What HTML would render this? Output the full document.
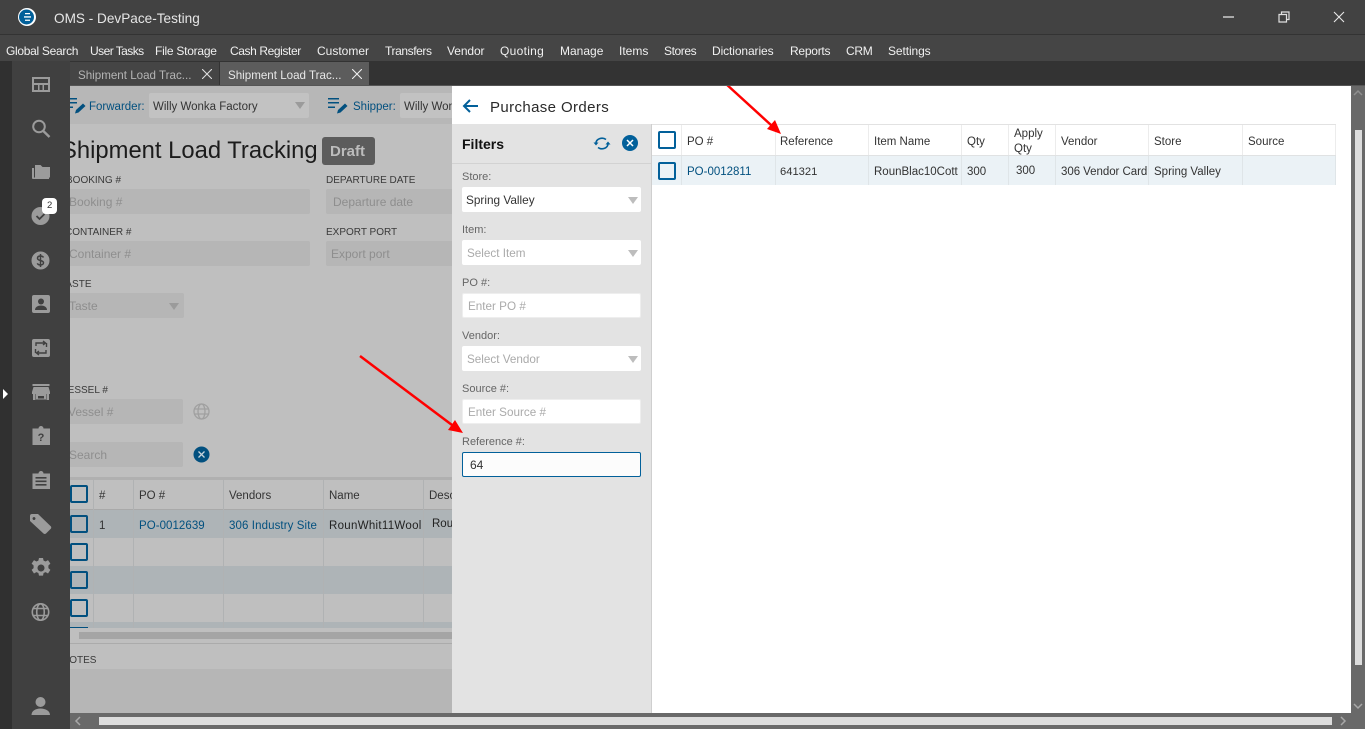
<!DOCTYPE html>
<html><head><meta charset="utf-8"><title>OMS</title>
<style>
html,body{margin:0;padding:0;width:1365px;height:729px;overflow:hidden;background:#bfbfbf;font-family:"Liberation Sans",sans-serif;font-size:11.5px;color:#222}
div,span,svg{position:absolute}
.t{white-space:nowrap;line-height:16px}
.m{top:44px;color:#f0f0f0;font-size:12px;white-space:nowrap;line-height:14px}
.lab{color:#3a3a3a;font-size:10px;white-space:nowrap;line-height:16px}
.inp{background:#b6b6b6;border-radius:2px}
.ph{color:#8e8e8e;font-size:12px;white-space:nowrap;line-height:14px}
.fl{color:#666;font-size:11px;left:462px;white-space:nowrap;line-height:14px}
.fi{left:462px;width:179px;height:25px;background:#fff;border-radius:2px}
.fp{color:#aaa;font-size:11.7px;white-space:nowrap;line-height:16px}
.arr{width:0;height:0;border-left:5px solid transparent;border-right:5px solid transparent;border-top:7px solid #bdbdbd}
.cb{box-sizing:border-box;width:18px;height:18px;border:2px solid #02609a;border-radius:2px}
.cbd{box-sizing:border-box;width:18px;height:18px;border:2px solid #02507f;border-radius:2px}
.vl{width:1px;background:#b0b2b3}
.vr{width:1px;background:#dfe5e8}
.vh{width:1px;background:#ececec}
.h{color:#333;white-space:nowrap;line-height:16px}
</style></head><body>

<!-- main shaded content -->
<div style="left:70px;top:86px;width:382px;height:627px;background:#bfbfbf"></div>
<div style="left:70px;top:86px;width:382px;height:38px;background:#b7b7b7"></div>
<svg style="left:66px;top:97px;width:20px;height:18px" viewBox="0 0 20 18"><path d="M0 1h11v1.500H0zM0 5h11v1.500H0zM0 9.500h7v1.500H0z" fill="#02507f"/><path d="M9 16.500l1-3.500 7-6.500 2.500 2.500-7 6.500z" fill="#02507f"/></svg>
<span class="t" style="left:89px;top:99px;color:#02507f">Forwarder:</span>
<div class="inp" style="left:149px;top:93px;width:160px;height:25px;background:#c2c2c2"></div>
<span class="t" style="left:153px;top:99px;color:#333">Willy Wonka Factory</span>
<div class="arr" style="left:295px;top:102px;border-top-color:#9b9b9b"></div>
<svg style="left:328px;top:97px;width:20px;height:18px" viewBox="0 0 20 18"><path d="M0 1h11v1.500H0zM0 5h11v1.500H0zM0 9.500h7v1.500H0z" fill="#02507f"/><path d="M9 16.500l1-3.500 7-6.500 2.500 2.500-7 6.500z" fill="#02507f"/></svg>
<span class="t" style="left:353px;top:99px;color:#02507f">Shipper:</span>
<div class="inp" style="left:400px;top:93px;width:60px;height:25px;background:#c2c2c2"></div>
<span class="t" style="left:404px;top:99px;color:#333">Willy Wonka</span>

<span class="t" style="left:61px;top:137px;font-size:23.8px;line-height:28px;color:#1c1c1c">Shipment Load Tracking</span>
<div style="left:322px;top:137px;width:53px;height:28px;background:#5c5c5c;border-radius:3px"></div>
<span class="t" style="left:330px;top:144px;font-size:15px;font-weight:bold;color:#bdbdbd">Draft</span>

<span class="lab" style="left:66px;top:173px">BOOKING #</span>
<div class="inp" style="left:60px;top:189px;width:250px;height:25px"></div>
<span class="ph" style="left:69px;top:195px">Booking #</span>
<span class="lab" style="left:326px;top:173px">DEPARTURE DATE</span>
<div class="inp" style="left:326px;top:189px;width:130px;height:25px"></div>
<span class="ph" style="left:333px;top:195px">Departure date</span>
<span class="lab" style="left:65px;top:225px">CONTAINER #</span>
<div class="inp" style="left:60px;top:241px;width:250px;height:25px"></div>
<span class="ph" style="left:69px;top:247px">Container #</span>
<span class="lab" style="left:326px;top:225px">EXPORT PORT</span>
<div class="inp" style="left:326px;top:241px;width:130px;height:25px"></div>
<span class="ph" style="left:331px;top:247px">Export port</span>
<span class="lab" style="left:60px;top:277px">TASTE</span>
<div class="inp" style="left:60px;top:293px;width:124px;height:25px"></div>
<span class="ph" style="left:69px;top:299px">Taste</span>
<div class="arr" style="left:169px;top:303px;border-top-color:#9b9b9b"></div>
<span class="lab" style="left:61px;top:383px">VESSEL #</span>
<div class="inp" style="left:60px;top:399px;width:123px;height:25px"></div>
<span class="ph" style="left:68px;top:405px">Vessel #</span>
<svg style="left:193px;top:403px;width:17px;height:17px" viewBox="0 0 17 17" fill="none" stroke="#a0a0a0" stroke-width="1.300"><circle cx="8.500" cy="8.500" r="7.500"/><ellipse cx="8.500" cy="8.500" rx="3.500" ry="7.500"/><path d="M1 6h15M1 11h15"/></svg>
<div class="inp" style="left:60px;top:442px;width:123px;height:25px"></div>
<span class="ph" style="left:69px;top:448px">Search</span>
<svg style="left:193px;top:446px;width:17px;height:17px" viewBox="0 0 17 17"><circle cx="8.500" cy="8.500" r="8" fill="#02507f"/><path d="M5.500 5.500l6 6M11.500 5.500l-6 6" stroke="#c8d4dc" stroke-width="1.300"/></svg>

<!-- background grid -->
<div style="left:70px;top:477px;width:382px;height:3px;background:#b0b0b0"></div>
<div style="left:70px;top:509px;width:382px;height:1px;background:#a9a9a9"></div>
<div style="left:70px;top:510px;width:382px;height:28px;background:#aeb4b7"></div>
<div style="left:70px;top:566px;width:382px;height:28px;background:#aeb4b7"></div>
<div style="left:70px;top:622px;width:382px;height:6px;background:#aeb4b7"></div>
<div class="vl" style="left:93px;top:480px;height:148px"></div>
<div class="vl" style="left:133px;top:480px;height:148px"></div>
<div class="vl" style="left:223px;top:480px;height:148px"></div>
<div class="vl" style="left:323px;top:480px;height:148px"></div>
<div class="vl" style="left:423px;top:480px;height:148px"></div>
<div class="cbd" style="left:70px;top:485px"></div>
<div class="cbd" style="left:70px;top:515px"></div>
<div class="cbd" style="left:70px;top:543px"></div>
<div class="cbd" style="left:70px;top:571px"></div>
<div class="cbd" style="left:70px;top:599px"></div>
<div style="left:70px;top:627px;width:18px;height:1px;background:#02507f"></div>
<span class="h" style="left:99px;top:488px">#</span>
<span class="h" style="left:139px;top:488px">PO #</span>
<span class="h" style="left:229px;top:488px">Vendors</span>
<span class="h" style="left:329px;top:488px">Name</span>
<span class="h" style="left:429px;top:488px">Descr</span>
<span class="h" style="left:99px;top:518px">1</span>
<span class="t" style="left:139px;top:518px;color:#02507f;letter-spacing:.05px">PO-0012639</span>
<span class="t" style="left:229px;top:518px;color:#02507f;letter-spacing:.1px">306 Industry Site</span>
<span class="t" style="left:329px;top:518px;color:#222;letter-spacing:.3px">RounWhit11Wool</span>
<span class="t" style="left:432px;top:516px;color:#222">Roun</span>
<div style="left:79px;top:632px;width:373px;height:7px;background:#a5a5a5"></div>
<div style="left:70px;top:643px;width:382px;height:1px;background:#ababab"></div>
<span class="lab" style="left:62px;top:653px">NOTES</span>
<div style="left:70px;top:669px;width:382px;height:44px;background:#b6b6b6"></div>

<!-- right panel -->
<div style="left:452px;top:86px;width:899px;height:627px;background:#fff"></div>
<svg style="left:462px;top:98px;width:17px;height:16px" viewBox="0 0 17 16" fill="none" stroke="#02609a" stroke-width="2"><path d="M16 8H2M8 2L2 8l6 6"/></svg>
<span class="t" style="left:490px;top:98px;font-size:15px;line-height:19px;color:#2a2a2a;letter-spacing:.38px">Purchase Orders</span>
<div style="left:452px;top:124px;width:200px;height:589px;background:#e3e3e3"></div>
<div style="left:651px;top:124px;width:1px;height:589px;background:#cfcfcf"></div>
<div style="left:452px;top:163px;width:199px;height:1px;background:#d2d2d2"></div>
<span class="t" style="left:462px;top:135px;font-size:14px;line-height:18px;font-weight:bold;color:#111">Filters</span>
<svg style="left:593px;top:135px;width:18px;height:17px" viewBox="0 0 18 17" fill="none" stroke="#02609a" stroke-width="1.600"><path d="M3 8a6 5 0 0 1 10-3.500M15 9a6 5 0 0 1-10 3.500"/><path d="M0.500 7.500h5L3 10.500zM12.500 9.500h5L15 6.500z" fill="#02609a" stroke="none"/></svg>
<svg style="left:622px;top:135px;width:16px;height:16px" viewBox="0 0 16 16"><circle cx="8" cy="8" r="8" fill="#02609a"/><path d="M5 5l6 6M11 5l-6 6" stroke="#fff" stroke-width="1.500"/></svg>

<span class="fl" style="top:170px">Store:</span>
<div class="fi" style="top:187px"></div>
<span class="t" style="left:466px;top:193px;color:#333;font-size:11.8px;line-height:14px">Spring Valley</span>
<div class="arr" style="left:628px;top:197px"></div>
<span class="fl" style="top:223px">Item:</span>
<div class="fi" style="top:240px"></div>
<span class="fp" style="left:467px;top:246px">Select Item</span>
<div class="arr" style="left:628px;top:250px"></div>
<span class="fl" style="top:276px">PO #:</span>
<div class="fi" style="top:293px;border:1px solid #eee;box-sizing:border-box"></div>
<span class="fp" style="left:468px;top:299px">Enter PO #</span>
<span class="fl" style="top:329px">Vendor:</span>
<div class="fi" style="top:346px"></div>
<span class="fp" style="left:467px;top:352px">Select Vendor</span>
<div class="arr" style="left:628px;top:356px"></div>
<span class="fl" style="top:382px">Source #:</span>
<div class="fi" style="top:399px;border:1px solid #eee;box-sizing:border-box"></div>
<span class="fp" style="left:468px;top:405px">Enter Source #</span>
<span class="fl" style="top:435px">Reference #:</span>
<div class="fi" style="top:452px;border:1px solid #02609a;box-sizing:border-box;background:#fcfcfc"></div>
<span class="t" style="left:470px;top:458px;color:#333;font-size:12px;line-height:14px">64</span>

<!-- PO grid -->
<div style="left:652px;top:124px;width:684px;height:1px;background:#e2e2e2"></div>
<div style="left:652px;top:155px;width:684px;height:1px;background:#e0e2e3"></div>
<div style="left:652px;top:156px;width:684px;height:29px;background:#ebf2f6"></div>
<div class="vh" style="left:681px;top:125px;height:30px"></div><div class="vr" style="left:681px;top:156px;height:29px"></div>
<div class="vh" style="left:775px;top:125px;height:30px"></div><div class="vr" style="left:775px;top:156px;height:29px"></div>
<div class="vh" style="left:868px;top:125px;height:30px"></div><div class="vr" style="left:868px;top:156px;height:29px"></div>
<div class="vh" style="left:961px;top:125px;height:30px"></div><div class="vr" style="left:961px;top:156px;height:29px"></div>
<div class="vh" style="left:1008px;top:125px;height:30px"></div><div class="vr" style="left:1008px;top:156px;height:29px"></div>
<div class="vh" style="left:1055px;top:125px;height:30px"></div><div class="vr" style="left:1055px;top:156px;height:29px"></div>
<div class="vh" style="left:1148px;top:125px;height:30px"></div><div class="vr" style="left:1148px;top:156px;height:29px"></div>
<div class="vh" style="left:1242px;top:125px;height:30px"></div><div class="vr" style="left:1242px;top:156px;height:29px"></div>
<div class="vh" style="left:1335px;top:125px;height:30px"></div><div class="vr" style="left:1335px;top:156px;height:29px"></div>
<div class="cb" style="left:658px;top:131px"></div>
<div class="cb" style="left:658px;top:162px"></div>
<span class="h" style="left:687px;top:134px">PO #</span>
<span class="h" style="left:780px;top:134px">Reference</span>
<span class="h" style="left:874px;top:134px">Item Name</span>
<span class="h" style="left:967px;top:134px">Qty</span>
<span class="h" style="left:1014px;top:126px">Apply</span>
<span class="h" style="left:1014px;top:141px">Qty</span>
<span class="h" style="left:1061px;top:134px">Vendor</span>
<span class="h" style="left:1154px;top:134px">Store</span>
<span class="h" style="left:1248px;top:134px">Source</span>
<span class="t" style="left:687px;top:164px;color:#02507f">PO-0012811</span>
<span class="h" style="left:780px;top:164px;font-size:11.2px">641321</span>
<span class="h" style="left:874px;top:164px">RounBlac10Cott</span>
<span class="h" style="left:967px;top:164px">300</span>
<span class="h" style="left:1016px;top:163px">300</span>
<span class="h" style="left:1061px;top:164px;letter-spacing:-.05px">306 Vendor Card</span>
<span class="h" style="left:1154px;top:164px">Spring Valley</span>

<!-- scrollbars -->
<div style="left:1351px;top:86px;width:14px;height:643px;background:#696969"></div>
<div style="left:1355px;top:130px;width:7px;height:535px;background:#dcdcdc"></div>
<svg style="left:1353px;top:88px;width:10px;height:10px" viewBox="0 0 10 10" fill="none" stroke="#8f8f8f" stroke-width="1.500"><path d="M1 7l4-4 4 4"/></svg>
<svg style="left:1353px;top:701px;width:10px;height:10px" viewBox="0 0 10 10" fill="none" stroke="#a8a8a8" stroke-width="1.500"><path d="M1 3l4 4 4-4"/></svg>
<div style="left:70px;top:713px;width:1295px;height:16px;background:#696969"></div>
<div style="left:99px;top:717px;width:1233px;height:8px;background:#dcdcdc"></div>
<svg style="left:73px;top:716px;width:10px;height:10px" viewBox="0 0 10 10" fill="none" stroke="#a8a8a8" stroke-width="1.500"><path d="M7 1L3 5l4 4"/></svg>
<svg style="left:1338px;top:716px;width:10px;height:10px" viewBox="0 0 10 10" fill="none" stroke="#a8a8a8" stroke-width="1.500"><path d="M3 1l4 4-4 4"/></svg>

<!-- annotation arrows -->
<svg style="left:0;top:0;width:1365px;height:729px" viewBox="0 0 1365 729">
<path d="M360 356L452 425" stroke="#f00" stroke-width="2.500"/><path d="M463 433L448 430L455 420z" fill="#f00"/>
<path d="M725 83L771 125" stroke="#f00" stroke-width="2.500"/><path d="M781 134L767 129L775 120z" fill="#f00"/>
</svg>

<!-- chrome -->
<div style="left:0;top:0;width:1365px;height:34px;background:#424242"></div>
<div style="left:0;top:34px;width:1365px;height:1px;background:#333"></div>
<div style="left:0;top:35px;width:1365px;height:26px;background:#454545"></div>
<div style="left:0;top:61px;width:1365px;height:25px;background:#333"></div>
<div style="left:70px;top:85px;width:1295px;height:1px;background:#555"></div>
<svg style="left:18px;top:8px;width:18px;height:18px" viewBox="0 0 18 18"><circle cx="9" cy="9" r="9" fill="#fff"/><circle cx="8.500" cy="9" r="7.500" fill="#02609a"/><path d="M7 5h5v1.300H7zM6 8.300h7v1.300H6zM7 11.600h5v1.300H7z" fill="#fff"/></svg>
<span class="t" style="left:54px;top:10px;font-size:13.6px;line-height:17px;color:#e6e6e6">OMS - DevPace-Testing</span>
<div style="left:1223px;top:16px;width:11px;height:2px;background:#aaa"></div>
<svg style="left:1278px;top:11px;width:12px;height:12px" viewBox="0 0 12 12" fill="none" stroke="#e0e0e0" stroke-width="1.200"><path d="M1 3.500h7.500V11H1zM3.500 3V1H11v7.500H9"/></svg>
<svg style="left:1333px;top:11px;width:12px;height:12px" viewBox="0 0 12 12" fill="none" stroke="#e8e8e8" stroke-width="1.100"><path d="M1 1l10 10M11 1L1 11"/></svg>

<span class="m" style="left:6px;letter-spacing:-.3px">Global Search</span>
<span class="m" style="left:90px;letter-spacing:-.55px">User Tasks</span>
<span class="m" style="left:155px;letter-spacing:-.25px">File Storage</span>
<span class="m" style="left:230px;letter-spacing:-.4px">Cash Register</span>
<span class="m" style="left:317px">Customer</span>
<span class="m" style="left:385px;letter-spacing:-.4px">Transfers</span>
<span class="m" style="left:447px;letter-spacing:-.1px">Vendor</span>
<span class="m" style="left:500px;letter-spacing:.3px">Quoting</span>
<span class="m" style="left:560px">Manage</span>
<span class="m" style="left:619px">Items</span>
<span class="m" style="left:664px;letter-spacing:-.4px">Stores</span>
<span class="m" style="left:712px;letter-spacing:-.1px">Dictionaries</span>
<span class="m" style="left:790px;letter-spacing:-.25px">Reports</span>
<span class="m" style="left:846px;letter-spacing:-.3px">CRM</span>
<span class="m" style="left:888px;letter-spacing:-.1px">Settings</span>

<!-- tabs -->
<div style="left:70px;top:62px;width:149px;height:23px;background:#454545"></div>
<span class="t" style="left:78px;top:68px;color:#b5b5b5;font-size:11.6px">Shipment Load Trac...</span>
<svg style="left:202px;top:69px;width:10px;height:10px" viewBox="0 0 10 10" fill="none" stroke="#ddd" stroke-width="1.100"><path d="M0 0l10 10M10 0L0 10"/></svg>
<div style="left:220px;top:62px;width:149px;height:23px;background:#5c5c5c"></div>
<span class="t" style="left:228px;top:68px;color:#e8e8e8;font-size:11.6px">Shipment Load Trac...</span>
<svg style="left:352px;top:69px;width:10px;height:10px" viewBox="0 0 10 10" fill="none" stroke="#eee" stroke-width="1.100"><path d="M0 0l10 10M10 0L0 10"/></svg>

<!-- sidebar -->
<div style="left:0;top:61px;width:12px;height:668px;background:#303030"></div>
<div style="left:12px;top:61px;width:58px;height:668px;background:#404040"></div>
<div style="left:3px;top:389px;width:0;height:0;border-top:5px solid transparent;border-bottom:5px solid transparent;border-left:5px solid #fff"></div>

<svg style="left:0;top:0;width:70px;height:729px" viewBox="0 0 70 729" fill="#9b9b9b">
<!-- table -->
<path fill-rule="evenodd" d="M32 77h18v15H32zM34 79v4h14v-4zM34 85v5h4v-5zM39.500 85v5h3v-5zM44 85v5h4v-5z"/>
<!-- search -->
<circle cx="39" cy="126.500" r="5.800" fill="none" stroke="#9b9b9b" stroke-width="2"/><path d="M43.300 131L49.500 137" fill="none" stroke="#9b9b9b" stroke-width="2.400"/>
<!-- folder -->
<path d="M35 165h5.500l2 2H50v10.500H35z"/><path d="M32 168h2v9.500h15V179H33a1 1 0 0 1-1-1z"/>
<!-- check -->
<circle cx="40.500" cy="216" r="9"/><path d="M36.500 216l3 3 5-5" fill="none" stroke="#404040" stroke-width="1.800"/>
<!-- dollar -->
<circle cx="40.500" cy="260.500" r="9"/><path d="M43.500 257.500c-.5-1-1.500-1.500-3-1.500-1.800 0-3 .8-3 2.200 0 3 6 1.600 6 4.600 0 1.400-1.300 2.200-3 2.200-1.500 0-2.700-.6-3.200-1.700M40.500 254v13" fill="none" stroke="#404040" stroke-width="1.500"/>
<!-- person card -->
<rect x="32" y="295" width="18" height="18" rx="2"/><circle cx="41" cy="301.500" r="3" fill="#404040"/><path d="M35 310c0-3 3-4.500 6-4.500s6 1.500 6 4.500z" fill="#404040"/>
<!-- transfer -->
<rect x="32" y="339" width="18" height="18" rx="2"/><path d="M36 346v-3h9M43 341l2.500 2-2.500 2M46 350v3h-9M39 355l-2.500-2 2.500-2M35.500 349v4M46.500 343v4" fill="none" stroke="#404040" stroke-width="1.400"/>
<!-- store -->
<path d="M32.500 384h17v2h-17zM33.500 387h15l1.500 5v2H32v-2z"/><path fill-rule="evenodd" d="M33 394h2.500v6H33zM46.500 394h2.500v6h-2.500zM36 394h10v5.500H36zM38 396v2.500h6V396z"/>
<!-- clipboard ? -->
<path d="M32.500 428.500h6a2.500 2.500 0 0 1 5 0h6.500V445H32.500z"/>
<text x="41" y="441" text-anchor="middle" font-family="Liberation Sans" font-size="11" font-weight="bold" fill="#404040">?</text>
<!-- clipboard list -->
<path d="M32.500 473.500h6a2.500 2.500 0 0 1 5 0h6.500V489H32.500z"/><path d="M35.500 477h11v1.600h-11zM35.500 480.500h11v1.600h-11zM35.500 484h11v1.600h-11z" fill="#404040"/>
<!-- tag -->
<path fill-rule="evenodd" d="M30 516a2 2 0 0 1 2-2h6l13 12.500a2 2 0 0 1 0 2l-5 5a2 2 0 0 1-2.500 0L30 521zM34 517a1.500 1.500 0 1 0 .01 0z"/>
<!-- gear -->
<path fill-rule="evenodd" d="M39 558h4l.6 2.600 2 .9 2.400-1.400 2.400 3.500-2 1.900v2.600l2 1.800-2.400 3.600-2.400-1.400-2 .9-.6 2.600h-4l-.6-2.600-2-.9-2.400 1.400-2.400-3.600 2-1.800v-2.600l-2-1.900 2.400-3.500 2.400 1.400 2-.9zM41 564.500a3.500 3.500 0 1 0 .01 0z"/>
<!-- globe -->
<g fill="none" stroke="#9b9b9b" stroke-width="1.600"><circle cx="40.500" cy="612" r="8.200"/><ellipse cx="40.500" cy="612" rx="3.800" ry="8.200"/><path d="M33 608.500h15M33 615.500h15"/></g>
<!-- user -->
<circle cx="40.500" cy="702" r="5"/><path d="M31.500 715c0-4 4-6.500 9-6.500s9.500 2.500 9.500 6.500z"/>
</svg>
<div style="left:42px;top:198px;width:15px;height:16px;background:#fff;border-radius:4px"></div>
<span class="t" style="left:47px;top:200px;font-size:9.5px;line-height:12px;color:#333">2</span>
</body></html>
